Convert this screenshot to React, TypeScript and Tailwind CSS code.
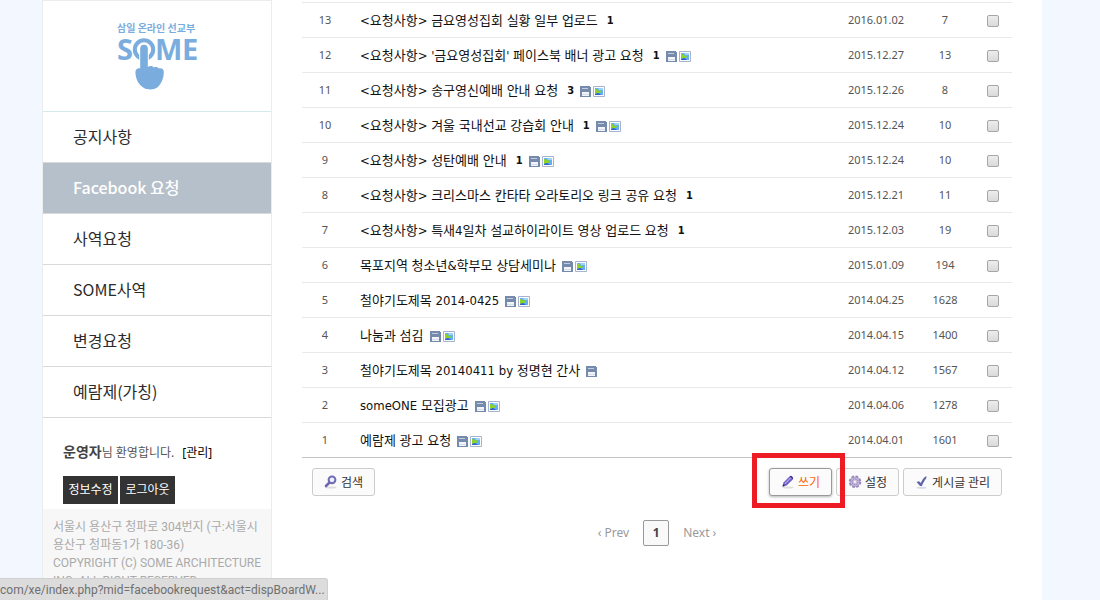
import React from 'react';

type Post = {
  no: number;
  title: string;
  comments?: number;
  file?: boolean;
  image?: boolean;
  date: string;
  views: number;
};

const posts: Post[] = [
  { no: 13, title: '<요청사항> 금요영성집회 실황 일부 업로드', comments: 1, date: '2016.01.02', views: 7 },
  { no: 12, title: "<요청사항> '금요영성집회' 페이스북 배너 광고 요청", comments: 1, file: true, image: true, date: '2015.12.27', views: 13 },
  { no: 11, title: '<요청사항> 송구영신예배 안내 요청', comments: 3, file: true, image: true, date: '2015.12.26', views: 8 },
  { no: 10, title: '<요청사항> 겨울 국내선교 강습회 안내', comments: 1, file: true, image: true, date: '2015.12.24', views: 10 },
  { no: 9, title: '<요청사항> 성탄예배 안내', comments: 1, file: true, image: true, date: '2015.12.24', views: 10 },
  { no: 8, title: '<요청사항> 크리스마스 칸타타 오라토리오 링크 공유 요청', comments: 1, date: '2015.12.21', views: 11 },
  { no: 7, title: '<요청사항> 특새4일차 설교하이라이트 영상 업로드 요청', comments: 1, date: '2015.12.03', views: 19 },
  { no: 6, title: '목포지역 청소년&학부모 상담세미나', file: true, image: true, date: '2015.01.09', views: 194 },
  { no: 5, title: '철야기도제목 2014-0425', file: true, image: true, date: '2014.04.25', views: 1628 },
  { no: 4, title: '나눔과 섬김', file: true, image: true, date: '2014.04.15', views: 1400 },
  { no: 3, title: '철야기도제목 20140411 by 정명현 간사', file: true, date: '2014.04.12', views: 1567 },
  { no: 2, title: 'someONE 모집광고', file: true, image: true, date: '2014.04.06', views: 1278 },
  { no: 1, title: '예람제 광고 요청', file: true, image: true, date: '2014.04.01', views: 1601 },
];

const menu = ['공지사항', 'Facebook 요청', '사역요청', 'SOME사역', '변경요청', '예람제(가칭)'];

function Logo() {
  return (
    <svg width="84" height="72" viewBox="0 0 84 72" role="img" aria-label="삼일 온라인 선교부 SOME" className="fill-[#7aadde]">
      <g className="font-['Noto_Sans_CJK_KR',sans-serif] text-[10px] font-bold">
        <text x="2" y="12">삼일 온라인 선교부</text>
      </g>
      <g className="font-['Open_Sans',sans-serif] text-[29px] font-bold">
        <text x="2" y="40">S</text>
        <text x="40" y="40">M</text>
        <text x="67" y="40">E</text>
      </g>
      <circle cx="29" cy="29.500" r="9.200" fill="none" stroke="#7aadde" strokeWidth="4" />
      <path d="M24.200 43V29a4.800 4.800 0 0 1 9.600 0v14z" fill="#fff" />
      <path d="M25.200 49V28.500a3.800 3.800 0 0 1 7.600 0V47c2-1.500 4.500-1.200 6 .4 2-.9 4-.5 5 1 2.500-.6 5 .6 5 3.200 0 7-2.200 12-6.500 15.900-3.300 2.400-9.600 2.400-13 .7C23.500 65 20.500 59 20.400 52c0-2.600 2-4 4.800-4z" />
    </svg>
  );
}

function FileIcon() {
  return (
    <svg width="11" height="11" viewBox="0 0 11 11" aria-label="첨부파일" role="img" shapeRendering="crispEdges" className="inline-block shrink-0">
      <path d="M0 0h9l2 2v9H0z" fill="#768aac" />
      <path d="M2 2h6v1H2z" fill="#c3cddf" />
      <path d="M2 6h7v4H2z" fill="#f1f5fa" />
      <path d="M2 8h7v1H2z" fill="#d5deea" />
    </svg>
  );
}

function ImageIcon() {
  return (
    <svg width="12" height="11" viewBox="0 0 12 11" aria-label="이미지" role="img" className="inline-block shrink-0">
      <path d="M.5.5h11v10H.5z" fill="#fff" stroke="#a5b3cf" />
      <path d="M2 2h8v7H2z" fill="#5fb0f5" />
      <path d="M5 2h5v2H6z" fill="#9fd3fb" />
      <path d="M2 3h2l1 2 2-1 1 2-2 1H4L2 8z" fill="#8ed321" />
      <path d="M2 8l3-1 2 1 1 1H2z" fill="#3262c9" />
    </svg>
  );
}

function SearchIcon() {
  return (
    <svg width="14" height="14" viewBox="0 0 14 14" aria-hidden="true">
      <ellipse cx="7" cy="12.500" rx="5.500" ry="1" fill="#ddd" />
      <path d="M5.500 7.500L2 11" stroke="#6f68ad" strokeWidth="2.600" strokeLinecap="round" />
      <circle cx="8" cy="4.800" r="3.400" fill="#eef1fb" stroke="#716bb5" strokeWidth="2" />
    </svg>
  );
}

function PencilIcon() {
  return (
    <svg width="14" height="14" viewBox="0 0 14 14" aria-hidden="true">
      <ellipse cx="7" cy="12.500" rx="5.500" ry="1" fill="#ddd" />
      <path d="M1.500 11.500l1-4L8.500 1.500l3.300 3-6.200 6z" fill="#6a5cc0" />
      <path d="M3.400 8.200l6-6 1 1-6 6z" fill="#a99fe8" />
      <path d="M8.500 1.500C9.300.6 10.200.6 11.200 1.400s1.200 2 .6 3.100z" fill="#3f3596" />
      <path d="M1.500 11.500l.6-2.300 1.900 1.700z" fill="#2d2a55" />
    </svg>
  );
}

function GearIcon() {
  return (
    <svg width="14" height="14" viewBox="0 0 14 14" aria-hidden="true">
      <circle cx="7" cy="6.800" r="5.300" fill="#b5a8d0" stroke="#9787bb" strokeWidth="2" strokeDasharray="2.600 1.560" />
      <circle cx="7" cy="6.800" r="4.300" fill="#c6bbdd" />
      <circle cx="7" cy="6.800" r="3" fill="none" stroke="#8d7cb4" strokeDasharray="1.500 .8" />
      <circle cx="7" cy="6.800" r="1.200" fill="#f3effa" />
    </svg>
  );
}

function CheckIcon() {
  return (
    <svg width="14" height="14" viewBox="0 0 14 14" aria-hidden="true">
      <ellipse cx="6.500" cy="12.700" rx="5" ry="1" fill="#d9d9ea" />
      <path d="M1.500 7l2.600-.8 1.700 1.900C7 5 8.500 2.500 11.500 1l-.3 2.500C9.500 5.500 8 8 7 11H5z" fill="#6464a8" />
    </svg>
  );
}

const button =
  "flex h-7 items-center gap-[3px] rounded-[3px] border bg-[#fbfbfb] px-[11px] font-['Noto_Sans_CJK_KR',sans-serif] text-[12px] leading-4";

export default function App() {
  return (
    <div className="min-h-screen bg-[#f3f7ff] pr-4 font-['Noto_Sans','Noto_Sans_CJK_KR',sans-serif]">
      <div className="mx-auto flex min-h-screen max-w-[1000px] bg-white">
        <aside className="flex w-[230px] shrink-0 flex-col border border-b-0 border-[#ececec]">
          <a href="#home" className="flex h-[111px] items-center justify-center border-b border-[#d6e9ef]">
            <Logo />
          </a>
          <nav className="font-['Noto_Sans_CJK_KR',sans-serif] text-[16px] leading-6">
            {menu.map((item) => (
              <a
                key={item}
                href={`#${item}`}
                className={
                  item === 'Facebook 요청'
                    ? 'block border-b border-[#d9d9d9] bg-[#b6c0cb] px-[30px] pt-3 pb-[14px] font-medium text-white'
                    : 'block border-b border-[#d9d9d9] px-[30px] pt-3 pb-[14px] text-[#2b2b2b]'
                }
              >
                {item}
              </a>
            ))}
          </nav>
          <div className="px-5 pt-6 pb-[5px]">
            <p className="flex h-5 items-baseline text-[12px] leading-5 whitespace-nowrap text-[#555]">
              <strong className="text-[14px] font-bold text-[#444]">운영자</strong>
              <span>님 환영합니다.</span>
              <a href="#admin" className="ml-2 text-black">[관리]</a>
            </p>
            <div className="mt-[14px] flex gap-[2px]">
              <button type="button" className="h-7 min-w-[55px] bg-[#333] px-[5px] text-[12px] leading-7 text-white">정보수정</button>
              <button type="button" className="h-7 min-w-[55px] bg-[#333] px-[5px] text-[12px] leading-7 text-white">로그아웃</button>
            </div>
          </div>
          <footer className="grow bg-[#f7f7f7] px-[10px] pt-[9px] font-[Roboto,'Noto_Sans_CJK_KR',sans-serif] text-[12px] leading-[18px] text-[#aaa]">
            <p>서울시 용산구 청파로 304번지 (구:서울시 용산구 청파동1가 180-36)</p>
            <p>COPYRIGHT (C) SOME ARCHITECTURE INC. ALL RIGHT RESERVED.</p>
          </footer>
        </aside>

        <main className="min-w-0 grow px-[30px] pt-[2px]">
          <table className="w-full table-fixed border-collapse border-t border-b border-t-[#e9e9e9] border-b-[#c4c4c4]">
            <colgroup>
              <col className="w-[46px]" />
              <col />
              <col className="w-[80px]" />
              <col className="w-[58px]" />
              <col className="w-[38px]" />
            </colgroup>
            <tbody className="divide-y divide-[#e9e9e9]">
              {posts.map((post) => (
                <tr key={post.no} className="h-[35px] text-center text-[11px] leading-4 text-[#555]">
                  <td>{post.no}</td>
                  <td className="pt-[2px] pl-3 text-left font-['DejaVu_Sans_Condensed','Noto_Sans_CJK_KR',sans-serif] text-[13px] text-[#111]">
                    <div className="flex items-center gap-2 whitespace-nowrap">
                      <a href={`#post-${post.no}`}>{post.title}</a>
                      {post.comments && <strong className="pl-px text-[11px]">{post.comments}</strong>}
                      {post.file && (
                        <span className="-ml-[2px] flex gap-[2px]">
                          <FileIcon />
                          {post.image && <ImageIcon />}
                        </span>
                      )}
                    </div>
                  </td>
                  <td>{post.date}</td>
                  <td>{post.views}</td>
                  <td className="pt-[2px]">
                    <input
                      type="checkbox"
                      aria-label={`${post.title} 선택`}
                      className="mx-auto block size-3 appearance-none rounded-[2px] border border-[#a6a6a6] bg-linear-to-b from-[#ededed] to-[#dadada] checked:bg-[#888]"
                    />
                  </td>
                </tr>
              ))}
            </tbody>
          </table>

          <div className="flex justify-between px-[10px] pt-[10px]">
            <button type="button" className={`${button} border-[#ccc] text-[#333]`}>
              <SearchIcon />
              검색
            </button>
            <div className="flex gap-1">
              <div className="relative">
                <button type="button" className={`${button} border-[#999] text-[#ff6600] shadow-[0_1px_3px_rgba(0,0,0,0.3)]`}>
                  <PencilIcon />
                  쓰기
                </button>
                <span className="pointer-events-none absolute -top-[15px] -left-[17px] z-10 h-[55px] w-[93px] border-[5px] border-[#ed1c24]" />
              </div>
              <button type="button" className={`${button} border-[#ccc] text-[#333]`}>
                <GearIcon />
                설정
              </button>
              <button type="button" className={`${button} border-[#ccc] text-[#333]`}>
                <CheckIcon />
                게시글 관리
              </button>
            </div>
          </div>

          <nav aria-label="페이지" className="mt-6 flex items-center justify-center gap-[14px] text-[12px] leading-4 text-[#999]">
            <a href="#prev">‹ Prev</a>
            <a href="#page-1" aria-current="page" className="flex size-[26px] items-center justify-center rounded-[2px] border border-[#999] bg-[#f9f9f9] font-bold text-[#444]">
              1
            </a>
            <a href="#next">Next ›</a>
          </nav>
        </main>
      </div>

      <div className="fixed bottom-0 left-0 h-[22px] rounded-tr-[3px] border-t border-r border-[#cfcfcf] bg-[#dcdcdc] pr-[2px] font-[Roboto,sans-serif] text-[12px] leading-[22px] text-[#707070]">
        com/xe/index.php?mid=facebookrequest&amp;act=dispBoardW...
      </div>
    </div>
  );
}
